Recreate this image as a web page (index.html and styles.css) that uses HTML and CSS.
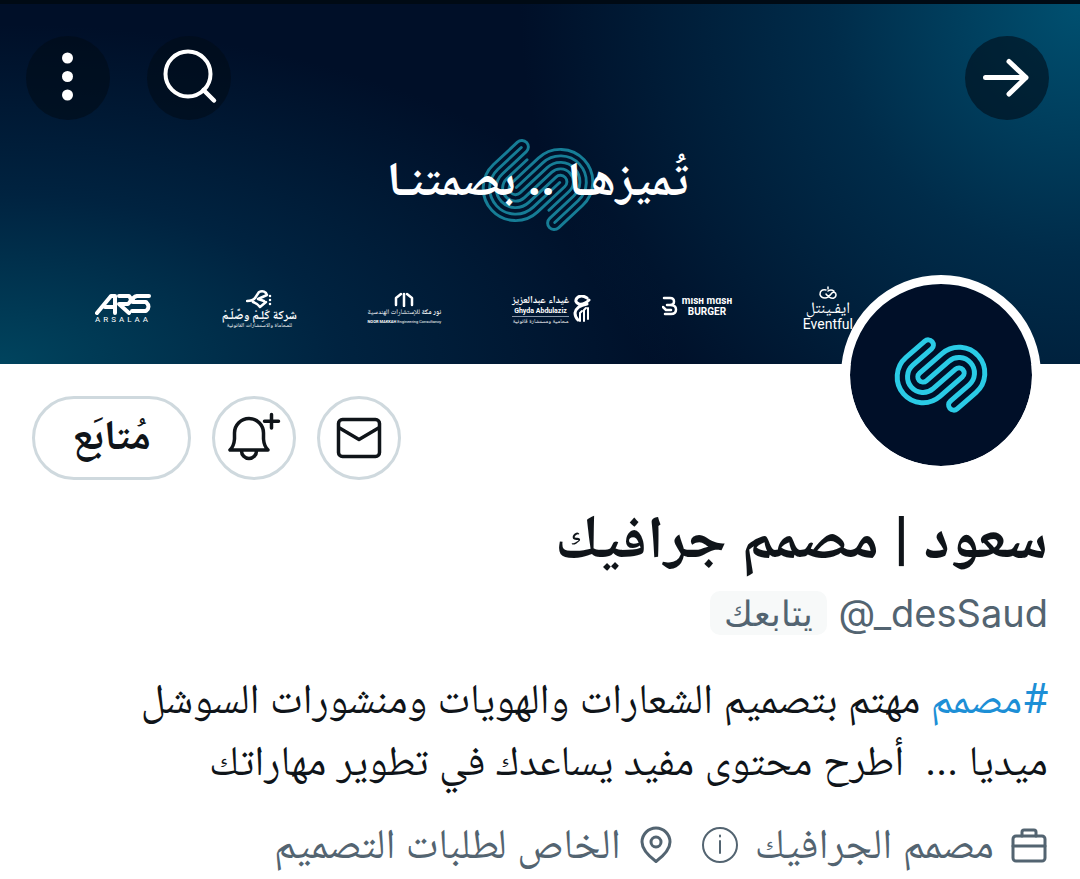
FILE: index.html
```html
<!DOCTYPE html>
<html lang="ar" dir="rtl">
<head>
    <meta charset="UTF-8">
    <meta name="viewport" content="width=device-width, initial-scale=1.0">
    <title>سعود | مصمم جرافيك</title>
    <link rel="stylesheet" href="styles.css">
</head>
<body>
    <header class="banner">
        <nav class="topbar">
            <button class="round-btn" aria-label="رجوع">
                <svg width="84" height="84" viewBox="0 0 84 84"><path d="M20.500 41.500H61M44 25.500L61 41.500L44 58" stroke-width="5"/></svg>
            </button>
            <div class="topbar-end">
                <button class="round-btn" aria-label="بحث">
                    <svg width="84" height="84" viewBox="0 0 84 84"><circle cx="41" cy="38" r="22.500" stroke-width="4"/><path d="M56.500 54L67 64.500" stroke-width="4.500"/></svg>
                </button>
                <button class="round-btn" aria-label="المزيد">
                    <svg width="84" height="84" viewBox="0 0 84 84" class="dots"><circle cx="41.500" cy="22" r="5.500"/><circle cx="41.500" cy="40.500" r="5.500"/><circle cx="41.500" cy="59" r="5.500"/></svg>
                </button>
            </div>
        </nav>

        <div class="tagline">
            <svg class="print" width="122" height="106" viewBox="-146 -126 292 252">
                <g transform="rotate(-43)">
                    <path d="M34-108.500H-44.500A77.500 77.500 0 0 0-44.500 46.500H44.500A15.500 15.500 0 0 0 44.500 15.500H-44.500A46.500 46.500 0 0 1-44.500-77.500H34A15.500 15.500 0 0 0 34-108.500Z"/>
                    <path id="mid" d="M32-93H-44.500A62 62 0 0 0-44.500 31H42"/>
                    <path d="M34-108.500H-44.500A77.500 77.500 0 0 0-44.500 46.500H44.500A15.500 15.500 0 0 0 44.500 15.500H-44.500A46.500 46.500 0 0 1-44.500-77.500H34A15.500 15.500 0 0 0 34-108.500Z" transform="rotate(180)"/>
                    <use href="#mid" transform="rotate(180)"/>
                    <path d="M22-62H-44.500A31 31 0 0 0-44.500 0H44.500A31 31 0 0 1 44.500 62H-22"/>
                </g>
            </svg>
            <span>تُميزهـا .. بصمتنـا</span>
        </div>

        <div class="clients">
            <div class="client eventful">
                <svg width="20" height="14" viewBox="0 0 20 14"><path d="M8 4Q2 3 2 8.500Q3 12 7 12Q10 12 13 8Q15 5 17.500 7Q19 10 16 12Q12 13 8 8M10 5Q13 3 16 5M10 1V3" stroke-width="1.500"/></svg>
                <span>ايفـينتل</span>
                <span class="latin">Eventful</span>
            </div>
            <div class="client mishmash">
                <svg width="16" height="20" viewBox="0 0 16 20"><path d="M2 2H8Q12 2 12 5.500T8 9H5M8 9Q14 9 14 13.500T9 18H3M1 11L4 14H9" stroke-width="2.500"/></svg>
                <span>mısн mɑsн<br>BURGER</span>
            </div>
            <div class="client ghyda">
                <svg width="18" height="28" viewBox="0 0 18 28"><path d="M14 3Q8-1 4 3Q1 7 6 9Q11 10 16 5M14 9Q3 11 2 18Q2 22 5 25" stroke-width="3"/><path d="M7 26V18L9 16M11 26V15L13 13M15 24V13" stroke-width="2"/></svg>
                <div>
                    <span class="name">غيداء عبدالعزيز</span>
                    <span class="latin">Ghyda Abdulaziz</span>
                    <span class="note">محامية ومستشارة قانونية</span>
                </div>
            </div>
            <div class="client noor">
                <svg width="20" height="15" viewBox="0 0 20 15"><path d="M2 13V6L7 2M10 14V2M13 2L18 6V13" stroke-width="2.500"/></svg>
                <span><b>نور مكة</b> للإستشارات الهندسية</span>
                <span class="latin"><b>NOOR MAKKAH</b> Engineering Consultancy</span>
            </div>
            <div class="client kalim">
                <svg width="26" height="20" viewBox="0 0 26 20"><path d="M1 12Q7 12 9 9L13 3Q17 1 20 4L21 6L12 10L18 12M7 13Q12 15 14 18L20 13" stroke-width="2.500"/><path d="M24 7v.1M24 11v.1M24 15v.1" stroke-width="2.500"/></svg>
                <span class="name">شركة كَلِـمْ وصَّلَـمْ</span>
                <span class="note">للمحاماة والاستشارات القانونية</span>
            </div>
            <div class="client arsalaa">
                <svg width="56" height="22" viewBox="0 0 56 22"><path d="M2 20L16 3H20V20M10 14H20M24 3H34Q38 7 33 11H24L34 20M54 3H42Q37 4 38 9H51Q56 14 51 18H37" stroke-width="4"/></svg>
                <span>ARSALAA</span>
            </div>
        </div>
    </header>

    <main class="profile">
        <div class="avatar">
            <svg width="96" height="84" viewBox="-144 -126 288 252">
                <g transform="rotate(-41)">
                    <path id="half" d="M30-108.500H-44.500A77.500 77.500 0 0 0-44.500 46.500H44.500A15.500 15.500 0 0 0 44.500 15.500H-44.500A46.500 46.500 0 0 1-44.500-77.500H30A15.500 15.500 0 0 0 30-108.500Z"/>
                    <use href="#half" transform="rotate(180)"/>
                </g>
            </svg>
        </div>

        <div class="actions">
            <button class="action" aria-label="رسالة">
                <svg width="48" height="48" viewBox="0 0 48 48"><rect x="3.500" y="5.500" width="41" height="37" rx="4"/><path d="M4.500 14L24 25.500L43.500 14"/></svg>
            </button>
            <button class="action" aria-label="تنبيهات">
                <svg width="56" height="56" viewBox="0 0 56 56"><path d="M4 40H42Q38 36 37.500 29V23A14.500 14.500 0 0 0 8.500 23V29Q8 36 4 40ZM15.500 41A7.500 7.500 0 0 0 30.500 41M45.500 4.500V18M38.500 11.200H52.500"/></svg>
            </button>
            <button class="follow"><span>مُتابَع</span></button>
        </div>

        <h1>سعود | مصمم جرافيك</h1>
        <div class="handle">
            <span dir="ltr">@_desSaud</span>
            <span class="badge">يتابعك</span>
        </div>

        <p class="bio"><a href="#">#مصمم</a> مهتم بتصميم الشعارات والهويات ومنشورات السوشل ميديا ...&nbsp; أطرح محتوى مفيد يساعدك في تطوير مهاراتك</p>

        <div class="meta">
            <svg width="38" height="38" viewBox="0 0 38 38"><rect x="3" y="11" width="32" height="25" rx="3"/><path d="M3 21H35M12 11V7Q12 5 14 5H24Q26 5 26 7V11"/></svg>
            <span>مصمم الجرافيك</span>
            <svg class="info" width="38" height="38" viewBox="0 0 38 38"><circle cx="19" cy="20" r="17"/><path d="M19 16V28M19 10.500V11.500"/></svg>
            <svg class="pin" width="38" height="38" viewBox="0 0 38 38"><path d="M19 36.500Q5 26 5 17A14 14 0 0 1 33 17Q33 26 19 36.500Z"/><circle cx="19" cy="17" r="5"/></svg>
            <span>الخاص لطلبات التصميم</span>
        </div>
    </main>
</body>
</html>
```
FILE: styles.css
```css
body {
    margin: 0;
    background: #fff;
    color: #0f1419;
    font-family: Roboto, "Noto Naskh Arabic", "Noto Sans Arabic", sans-serif;
}
svg {
    display: block;
    fill: none;
    stroke: currentColor;
    stroke-linecap: round;
    stroke-linejoin: round;
    flex-shrink: 0;
}
button {
    font: inherit;
    padding: 0;
    cursor: pointer;
}
.banner {
    box-sizing: border-box;
    height: 364px;
    border-top: 4px solid #000a14;
    padding: 32px 31px 0 26px;
    color: #fff;
    background:
        radial-gradient(ellipse 560px 560px at 100% 0, #005070, rgba(0, 56, 88, 0.7) 45%, transparent),
        radial-gradient(ellipse 680px 340px at 0 100%, #00445e, rgba(0, 48, 80, 0.6) 50%, transparent),
        #000f28;
}
.topbar,
.topbar-end {
    display: flex;
    justify-content: space-between;
    gap: 37px;
}
.round-btn {
    width: 84px;
    height: 84px;
    border: none;
    border-radius: 50%;
    background: rgba(0, 12, 24, 0.6);
    color: #fff;
}
.dots {
    fill: #fff;
    stroke: none;
}
.tagline {
    display: grid;
    place-items: center;
    height: 100px;
    margin-top: 12px;
    font-size: 48px;
    font-weight: bold;
    line-height: 80px;
}
.tagline > * {
    grid-area: 1 / 1;
}
.tagline span {
    padding-bottom: 12px;
}
.print {
    color: #167d96;
    stroke-width: 7;
}
.clients {
    display: flex;
    justify-content: space-between;
    align-items: center;
    height: 60px;
    margin-top: 47px;
    padding: 0 196px 0 69px;
    white-space: nowrap;
}
.client {
    display: flex;
    flex-direction: column;
    align-items: center;
    font-size: 7px;
    line-height: 10px;
}
.client span {
    display: block;
}
.eventful {
    font-size: 16px;
    line-height: 16px;
}
.eventful .latin {
    font-size: 14px;
}
.mishmash,
.ghyda {
    flex-direction: row;
    gap: 4px;
}
.mishmash {
    direction: ltr;
    padding-bottom: 6px;
    font-size: 10px;
    font-weight: bold;
    line-height: 11px;
    text-align: center;
}
.name {
    font-size: 12px;
    font-weight: bold;
    line-height: 12px;
}
.ghyda {
    text-align: center;
}
.ghyda .name {
    font-size: 10px;
}
.ghyda .latin {
    border-bottom: 1px solid #8795a8;
    font-size: 7px;
    font-weight: bold;
}
.noor .latin {
    font-size: 4px;
}
.note {
    font-size: 6px;
    line-height: 8px;
}
.arsalaa {
    font-size: 8px;
    letter-spacing: 3px;
}
.profile {
    position: relative;
    padding: 32px;
}
.avatar {
    position: absolute;
    top: -89px;
    right: 39px;
    display: grid;
    place-items: center;
    width: 182px;
    height: 182px;
    border: 9px solid #fff;
    border-radius: 50%;
    background: #000f28 padding-box;
    color: #2acbe6;
    stroke-width: 15;
}
.actions {
    display: flex;
    justify-content: flex-end;
    gap: 21px;
}
.action,
.follow {
    display: grid;
    place-items: center;
    box-sizing: border-box;
    width: 84px;
    height: 84px;
    border: 3px solid #cfd9de;
    border-radius: 42px;
    background: #fff;
    color: #0f1419;
    stroke-width: 3.5;
}
.follow {
    width: 159px;
    font-size: 42px;
    font-weight: bold;
    line-height: 60px;
}
.follow span {
    padding-bottom: 6px;
}
h1 {
    margin: 18px 0 0;
    font-size: 60px;
    line-height: 80px;
}
.handle {
    display: flex;
    align-items: center;
    gap: 12px;
    height: 56px;
    margin-top: 7px;
    color: #536471;
    font-family: Inter, Roboto, sans-serif;
    font-size: 38px;
}
.badge {
    padding: 0 14px;
    border-radius: 10px;
    background: #f7f9f9;
    font-size: 35px;
    line-height: 44px;
}
.bio {
    margin: 27px 0 0;
    padding-left: 80px;
    font-size: 42px;
    line-height: 62px;
}
.bio a {
    color: #1d8fd6;
    text-decoration: none;
}
.meta {
    display: flex;
    align-items: center;
    gap: 16px;
    margin-top: 22px;
    color: #536471;
    font-size: 42px;
    line-height: 60px;
    stroke-width: 3;
    white-space: nowrap;
}
.info {
    stroke-width: 2;
}
.pin {
    margin-right: 10px;
}
```
